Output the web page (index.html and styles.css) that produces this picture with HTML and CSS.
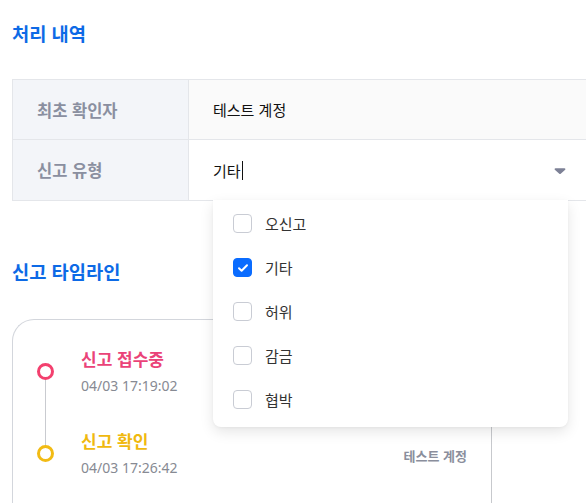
FILE: index.html
```html
<!DOCTYPE html>
<html lang="ko">
<head>
<meta charset="utf-8">
<link rel="stylesheet" href="styles.css">
</head>
<body>
<main class="page">
  <section class="section">
    <h2 class="heading">처리 내역</h2>
    <div class="table">
      <div class="row row-shaded">
        <div class="label">최초 확인자</div>
        <div class="value">테스트 계정</div>
      </div>
      <div class="row">
        <div class="label">신고 유형</div>
        <div class="value value-select">
          <div class="select">
            <span class="select-text">기타<span class="caret"></span></span>
            <svg class="arrow" width="12" height="8" viewBox="0 0 12 8"><path d="M1.5 1.2h9c.8 0 1.2.9.7 1.5L6.7 6.8c-.4.4-1 .4-1.4 0L.8 2.7c-.5-.6-.1-1.5.7-1.5z" fill="#7d8196"/></svg>
          </div>
          <ul class="menu">
            <li class="option"><span class="box"></span><span>오신고</span></li>
            <li class="option"><span class="box box-checked"><svg width="12" height="10" viewBox="0 0 12 10"><path d="M2 5.2l2.6 2.5L10 2.3" fill="none" stroke="#fff" stroke-width="2" stroke-linecap="round" stroke-linejoin="round"/></svg></span><span>기타</span></li>
            <li class="option"><span class="box"></span><span>허위</span></li>
            <li class="option"><span class="box"></span><span>감금</span></li>
            <li class="option"><span class="box"></span><span>협박</span></li>
          </ul>
        </div>
      </div>
    </div>
  </section>
  <section class="section section-timeline">
    <h2 class="heading">신고 타임라인</h2>
    <div class="card">
      <ol class="timeline">
        <li class="event">
          <span class="dot dot-pink"></span>
          <div class="event-body">
            <div class="event-title title-pink">신고 접수중</div>
            <div class="event-time">04/03 17:19:02</div>
          </div>
        </li>
        <li class="event">
          <span class="dot dot-yellow"></span>
          <div class="event-body">
            <div class="event-title title-yellow">신고 확인</div>
            <div class="event-time">04/03 17:26:42</div>
          </div>
          <div class="event-actor">테스트 계정</div>
        </li>
      </ol>
    </div>
  </section>
</main>
</body>
</html>
```

FILE: styles.css
```css
* { box-sizing: border-box; }
html, body { margin: 0; padding: 0; background: #fff; overflow: hidden; }
body {
  font-family: "Noto Sans CJK KR", "Noto Sans", sans-serif;
  color: #222;
  width: 586px;
  height: 503px;
}
.page { padding: 20px 0 0 12px; }
.heading {
  margin: 0;
  font-size: 18.7px;
  line-height: 26px;
  font-weight: 700;
  color: #0d6ae6;
}
.table {
  margin-top: 33px;
  border-top: 1px solid #e4e6ea;
  border-left: 1px solid #e4e6ea;
}
.row {
  display: flex;
  height: 61px;
  border-bottom: 1px solid #e4e6ea;
}
.row:first-child { height: 60px; }
.label {
  width: 176px;
  flex: none;
  background: #f3f5f9;
  border-right: 1px solid #e4e6ea;
  display: flex;
  align-items: center;
  padding-left: 24px;
  font-size: 16.5px;
  font-weight: 700;
  color: #8a8fa0;
}
.value {
  flex: 1;
  display: flex;
  align-items: center;
  padding-left: 24px;
  font-size: 15px;
  color: #111;
}
.row-shaded .value { background: #fafafa; }
.value-select { position: relative; padding-right: 18px; }
.select {
  flex: 1;
  display: flex;
  align-items: center;
  justify-content: space-between;
}
.select-text { display: inline-flex; align-items: center; }
.caret {
  display: inline-block;
  width: 1px;
  height: 19px;
  background: #111;
  margin-left: 1px;
}
.arrow { margin-right: 2px; margin-top: 2px; }
.menu {
  position: absolute;
  left: 24px;
  top: 60px;
  width: 355px;
  margin: 0;
  padding: 2px 0 6px;
  list-style: none;
  background: #fff;
  border-radius: 0 0 8px 8px;
  box-shadow: 0 5px 14px rgba(0, 0, 0, 0.10), 0 1px 3px rgba(0,0,0,0.04);
  z-index: 5;
}
.option {
  display: flex;
  align-items: center;
  height: 43.8px;
  padding-left: 20px;
  gap: 13px;
  font-size: 15px;
  color: #333;
}
.box {
  width: 19px;
  height: 19px;
  border: 1.5px solid #c9ccd4;
  border-radius: 4px;
  display: flex;
  align-items: center;
  justify-content: center;
  background: #fff;
}
.box-checked { background: #0a6cff; border-color: #0a6cff; }
.section-timeline { margin-top: 57px; }
.card {
  margin-top: 35px;
  width: 480px;
  height: 220px;
  border: 1px solid #d3d6dc;
  border-right-color: #c7c9cd;
  border-top-left-radius: 22px;
  padding: 24px 24px 0 24px;
}
.timeline {
  position: relative;
  margin: 0;
  padding: 0;
  list-style: none;
  display: flex;
  flex-direction: column;
  gap: 28px;
}
.timeline::before {
  content: "";
  position: absolute;
  left: 8px;
  top: 32px;
  height: 70px;
  width: 1px;
  background: #c9cbd0;
}
.event {
  display: flex;
  align-items: center;
  min-height: 54px;
}
.dot {
  width: 17px;
  height: 17px;
  border-radius: 50%;
  border: 3.5px solid;
  background: #fff;
  flex: none;
  margin-top: 0;
  position: relative;
}
.dot-pink { border-color: #f3406e; }
.dot-yellow { border-color: #f2bb14; }
.event-body { flex: 1; margin-left: 27px; }
.event-title {
  font-size: 17px;
  font-weight: 700;
  line-height: 23px;
}
.title-pink { color: #ea4378; }
.title-yellow { color: #f0b90f; }
.event-time {
  margin-top: 6px;
  font-size: 14px;
  line-height: 19px;
  color: #878a93;
  font-family: "Noto Sans", "Noto Sans CJK KR", sans-serif;
}
.event-actor {
  font-size: 13px;
  font-weight: 700;
  color: #8a8e9c;
  margin-top: 4px;
}
```
